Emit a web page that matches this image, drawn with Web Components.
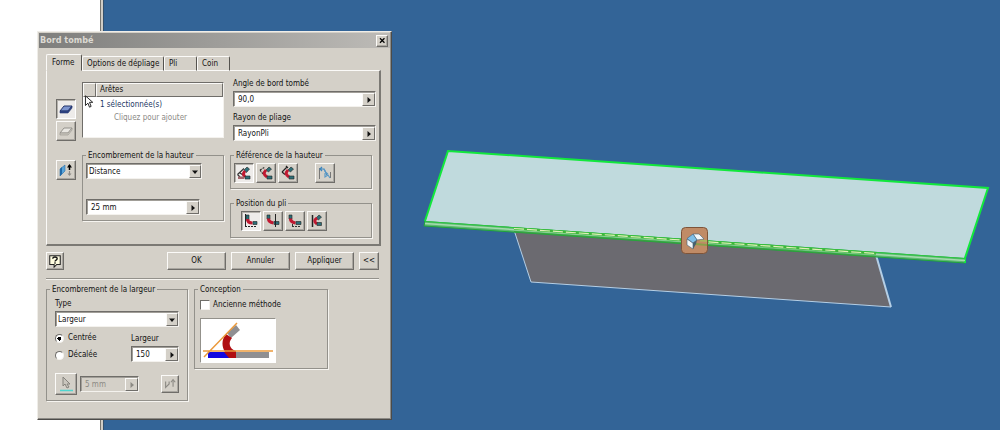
<!DOCTYPE html>
<html lang="fr">
<head>
<meta charset="utf-8">
<title>Bord tombé</title>
<style>
  body { margin: 0; }
</style>
</head>
<body>
<cad-app></cad-app>
<script>
const BASE = `
  *, *::before, *::after { box-sizing: border-box; }
  input, select, button { font: inherit; color: inherit; margin: 0; border-radius: 0; }
  :focus-visible { outline: 1px dotted #000; outline-offset: -3px; }
`;

function define(name, css, html) {
  customElements.define(name, class extends HTMLElement {
    constructor() {
      super();
      this.attachShadow({ mode: 'open' });
    }
    connectedCallback() {
      const body = typeof html === 'function' ? html(this) : html;
      this.shadowRoot.innerHTML = `<style>${BASE}${css}</style>${body}`;
    }
  });
}

const attr = (el, name) => el.getAttribute(name) || '';

const ICONS = {
  plateOn: `<path d="M2 10 6 5h8l-4 5z" fill="#7d95cf" stroke="#23346b"/><path d="M2 10v2h8l4-5V5l-4 5z" fill="#2f4685" stroke="#23346b" stroke-width=".6"/>`,
  plateOff: `<path d="M2 10 6 5h8l-4 5z" fill="#e9e7e2" stroke="#94928c"/><path d="M2 10v2h8l4-5V5l-4 5z" fill="#c9c6be" stroke="#94928c" stroke-width=".6"/>`,
  flip: `<path d="M2 7 7 3v6l-5 5z" fill="#58a4da" stroke="#2b6ea8" stroke-width=".6"/><path d="M2 7 4 5v7l-2 2z" fill="#226aa8"/><path d="M11.500 8V3" stroke="#000" stroke-width="1.500"/><path d="M9 5.500 11.500 2 14 5.500z" fill="#000"/><path d="M11.500 9v4" stroke="#8c8a86" stroke-width="1.200"/><path d="M9.500 11.500 11.500 14l2-2.500z" fill="#8c8a86"/>`,
  h1: `<path d="M1.500 9.500 8 3.500M1.500 9.500 4 12M4 8l3 2" stroke="#333" stroke-width="1.200"/><path d="m8 5 3-3 2.500 2-3 3.500z" fill="#2d6f78" stroke="#222" stroke-width=".6"/><path d="M9 6c-2 2-2 4 0 6" stroke="#c01931" stroke-width="3" fill="none"/><path d="M2 11.500h6V14H2z" fill="#a3666c"/><path d="M9 11h5v3H9z" fill="#2d6f78" stroke="#222" stroke-width=".6"/>`,
  h2: `<path d="m2 5 5-3M2 5l3 4" stroke="#333" stroke-width="1.200" stroke-dasharray="2 1"/><path d="m8 5 3-3 2.500 2-3 3z" fill="#2d6f78" stroke="#222" stroke-width=".6"/><path d="M8 5C5 8 6 10 9 12" stroke="#c01931" stroke-width="3" fill="none"/><path d="M9 11h5v3H9z" fill="#2d6f78" stroke="#222" stroke-width=".6"/>`,
  h3: `<path d="m2 7 5-5M2 7l3 2.500M6 1l2 2" stroke="#222" stroke-width="1.200"/><path d="m8 5 3-3 2.500 2-3 3z" fill="#2d6f78" stroke="#222" stroke-width=".6"/><path d="M8 5C5 8 6 10 9 12" stroke="#c01931" stroke-width="3" fill="none"/><path d="M9 11h5v3H9z" fill="#2d6f78" stroke="#222" stroke-width=".6"/>`,
  measure: `<path d="M2.500 3v11M13.500 7v6" stroke="#777" stroke-width="1"/><path d="M3 4h4l3 6M5 2 3 4l2 2" stroke="#3d86bd" stroke-width="1.200"/><path d="M7 4c1 3 2 4 4 5M8 8v4l3-2 2 3" stroke="#5c9ac6" stroke-width="1.200"/>`,
  p1: `<path d="M3 2h3v5H3z" fill="#2d6f78" stroke="#222" stroke-width=".6"/><path d="M4.500 6c0 2.500 2 4 5 4" stroke="#c01931" stroke-width="3.200"/><path d="M10 8.500h4v3h-4z" fill="#2d6f78" stroke="#222" stroke-width=".6"/><path d="M2.500 1v13" stroke="#222"/><path d="M2 13.500h12" stroke="#222" stroke-dasharray="2 1"/>`,
  p2: `<path d="M2 2h3v4H2z" fill="#2d6f78" stroke="#222" stroke-width=".6"/><path d="M3.500 5.500c0 2.500 2 4 5 4.500" stroke="#c01931" stroke-width="3.200"/><path d="M9 8.500h5v3H9z" fill="#2d6f78" stroke="#222" stroke-width=".6"/><path d="M10.500 1v13" stroke="#222"/>`,
  p3: `<path d="M2 2h3v4H2z" fill="#2d6f78" stroke="#222" stroke-width=".6"/><path d="M3.500 5.500c0 2.500 2 4 5 4.500" stroke="#c01931" stroke-width="3.200"/><path d="M9 8.500h5v3H9z" fill="#2d6f78" stroke="#222" stroke-width=".6"/><path d="M5.500 11v3M5 13.500h9" stroke="#333" stroke-dasharray="2 1"/>`,
  p4: `<path d="M3.500 2v12" stroke="#222" stroke-width="1.500"/><path d="m7 5 3-3 2.500 2-3 3z" fill="#2d6f78" stroke="#222" stroke-width=".6"/><path d="M8 5C5 7 5 9 8 11" stroke="#c01931" stroke-width="3"/><path d="M8 9.500h4.500v3H8z" fill="#2d6f78" stroke="#222" stroke-width=".6"/>`,
  help: `<path d="M2 2h12v10h-4l-3 3v-3H2z" fill="#fffde0" stroke="#222" stroke-width="1.200"/><path d="M5.500 5.500c0-3 5-2.500 5 0C10.500 7 8 7 8 8.500M8 9.500v1.500" fill="none" stroke="#111" stroke-width="1.500"/>`,
  pick: `<path d="M5 1v9l2-2 2 4 2-1-2-3h3z" fill="#c9c6be" stroke="#85837d"/><path d="M2 14.500h13" stroke="#4fd6d0" stroke-width="1.500"/>`,
  side: `<path d="M3 5v7l4-4V5" stroke="#8c8a84" stroke-width="1.300"/><path d="M11.500 11V4" stroke="#8c8a84" stroke-width="1.300"/><path d="m9 6 2.500-3L14 6" stroke="#8c8a84" stroke-width="1.300"/>`,
  close: `<path d="m3.500 4 8 8M11.500 4l-8 8" stroke="#000" stroke-width="2.200"/>`,
  cursor: `<path d="M3 1v12l3-3 2 5 2-1-2-5h4z" fill="#fff" stroke="#222" stroke-width="1.200"/>`,
  right: `<path d="M5 2v12l7-6z" fill="currentColor"/>`,
  down: `<path d="M2 5h12l-6 7z" fill="currentColor"/>`
};

define('glyph-icon',
  `:host { display: block; width: 16px; height: 16px; }
   svg { display: block; width: 100%; height: 100%; }`,
  el => `<svg viewBox="0 0 16 16" fill="none" aria-hidden="true">${ICONS[attr(el, 'name')]}</svg>`);

define('tool-button',
  `:host { display: block; width: var(--size, 20px); height: var(--size, 20px); }
   button { display: grid; place-items: center; width: 100%; height: 100%; padding: 0; background: #d4d0c8;
     border: 1px solid; border-color: #fbfaf8 #6f6d69 #6f6d69 #fbfaf8; box-shadow: inset -1px -1px #a9a6a0; }
   button[aria-pressed="true"] { background: #eeecea; border-color: #6f6d69 #fff #fff #6f6d69; box-shadow: inset 1px 1px #b5b2ac; }
   glyph-icon { width: var(--icon, 16px); height: var(--icon, 16px); }`,
  el => `<button type="button" aria-label="${attr(el, 'label')}" aria-pressed="${el.hasAttribute('pressed')}"
     ${el.hasAttribute('disabled') ? 'disabled' : ''}><glyph-icon name="${attr(el, 'icon')}"></glyph-icon></button>`);

define('push-button',
  `:host { display: block; width: 59px; height: 18px; }
   button { display: block; width: 100%; height: 100%; padding: 0; background: #d4d0c8; text-align: center;
     border: 1px solid; border-color: #fbfaf8 #6f6d69 #6f6d69 #fbfaf8; box-shadow: inset -1px -1px #a9a6a0; }`,
  `<button type="button"><slot></slot></button>`);

define('value-field',
  `:host { display: block; }
   label { display: block; line-height: 14px; white-space: nowrap; }
   .box { display: flex; height: 16px; background: #fff; border: 1px solid; border-color: #6f6d69 #f4f2ee #f4f2ee #6f6d69;
     box-shadow: inset 1px 1px #a19e98; padding: 1px 0 0 1px; }
   input { flex: 1; min-width: 0; border: 0; padding: 0 3px; background: none; outline: 0; }
   button { display: grid; place-items: center; width: 13px; padding: 0; background: #d4d0c8;
     border: 1px solid; border-color: #fbfaf8 #6f6d69 #6f6d69 #fbfaf8; }
   glyph-icon { width: 8px; height: 8px; }
   :host([disabled]) .box { background: #d4d0c8; }
   :host([disabled]) input, :host([disabled]) button { color: #8c8a84; }`,
  el => {
    const off = el.hasAttribute('disabled') ? 'disabled' : '';
    const label = attr(el, 'label');
    return `${label ? `<label for="v">${label}</label>` : ''}
      <div class="box"><input id="v" type="text" value="${attr(el, 'value')}" ${off} ${label ? '' : `aria-label="${attr(el, 'hint')}"`}>
      <button type="button" aria-label="Plus" ${off}><glyph-icon name="right"></glyph-icon></button></div>`;
  });

define('choice-field',
  `:host { display: block; }
   label { display: block; line-height: 14px; }
   .box { display: grid; position: relative; height: 16px; background: #fff; border: 1px solid;
     border-color: #6f6d69 #f4f2ee #f4f2ee #6f6d69; box-shadow: inset 1px 1px #a19e98; padding: 1px 0 0 1px; }
   select { appearance: none; width: 100%; height: 100%; border: 0; padding: 0 14px 0 1px; background: none; outline: 0; }
   .arrow { position: absolute; top: 1px; right: 0; bottom: 0; width: 12px; display: grid; place-items: center; pointer-events: none;
     background: #d4d0c8; border: 1px solid; border-color: #fbfaf8 #6f6d69 #6f6d69 #fbfaf8; }
   glyph-icon { width: 8px; height: 8px; }`,
  el => {
    const label = attr(el, 'label');
    return `${label ? `<label for="s">${label}</label>` : ''}
      <div class="box"><select id="s" ${label ? '' : `aria-label="${attr(el, 'hint')}"`}><option>${attr(el, 'value')}</option></select>
      <span class="arrow"><glyph-icon name="down"></glyph-icon></span></div>`;
  });

define('field-group',
  `:host { display: block; --inset: var(--pad-x, 3px); }
   fieldset { margin: 0; min-width: 0; height: 100%; padding: 2px var(--inset) 5px; border: 1px solid #93918b; box-shadow: 1px 1px #f6f4f0; }
   legend { margin-left: calc(3px - var(--inset)); padding: 0 2px; line-height: 14px; height: 12px; white-space: nowrap; }`,
  el => `<fieldset><legend>${attr(el, 'label')}</legend><slot></slot></fieldset>`);

define('edge-list',
  `:host { display: block; position: relative; height: 56px; background: #fff; border: 1px solid;
     border-color: #6f6d69 #f4f2ee #f4f2ee #6f6d69; }
   table { width: 100%; border-collapse: separate; border-spacing: 0; table-layout: fixed; }
   th, td { padding: 0 0 0 4px; text-align: left; font-weight: normal; line-height: 13px; height: 13px; }
   th { background: #d4d0c8; border: 1px solid; border-color: #fbfaf8 #6f6d69 #6f6d69 #fbfaf8; line-height: 12px; height: 14px; padding-left: 3px; }
   th:first-child { width: 13px; padding: 0; }
   tr:first-child td { padding-top: 1px; }
   td { color: #1c3763; }
   td.add { color: #8c8a86; padding-left: 18px; }
   glyph-icon { position: absolute; left: 0; top: 12px; width: 13px; height: 13px; }`,
  `<table><thead><tr><th aria-label="Sélection"></th><th>Arêtes</th></tr></thead>
   <tbody><tr><td></td><td>1 sélectionnée(s)</td></tr><tr><td></td><td class="add">Cliquez pour ajouter</td></tr></tbody></table>
   <glyph-icon name="cursor"></glyph-icon>`);

define('tab-strip',
  `:host { display: flex; align-items: flex-end; height: 17px; margin-bottom: -1px; position: relative; }
   button { height: 15px; padding: 0 0 0 2px; background: #d4d0c8; text-align: left; white-space: nowrap; border: 1px solid;
     border-color: #fbfaf8 #55534f #fbfaf8 #fbfaf8; border-radius: 2px 2px 0 0; width: 33px; }
   button[aria-selected="true"] { height: 17px; width: 36px; padding-left: 5px; border-bottom-color: #d4d0c8; }
   button.wide { width: 82px; }
   button:nth-child(n+3) { padding-left: 4px; }`,
  `<button type="button" role="tab" aria-selected="true">Forme</button><button type="button" role="tab" class="wide">Options de dépliage</button><button type="button" role="tab">Pli</button><button type="button" role="tab">Coin</button>`);

define('shape-panel',
  `:host { display: grid; grid-template-columns: 20px 142px 1fr; gap: 8px 6px; padding: 6px 3px 6px 9px; border: 1px solid;
     border-color: #fbfaf8 #7b7974 #7b7974 #fbfaf8; border-right-width: 2px; border-bottom-width: 2px; }
   .plates { display: flex; flex-direction: column; justify-content: flex-end; gap: 2px; }
   .fields { display: flex; flex-direction: column; gap: 4px; padding-left: 3px; }
   edge-list { margin-top: 5px; }
   .flip { padding-top: 11px; }
   .size { height: 72px; }
   .size choice-field { margin-bottom: 20px; margin-right: 18px; }
   .size value-field { margin-right: 20px; }
   .groups { display: flex; flex-direction: column; gap: 8px; padding-right: 4px; }
   .row { display: flex; gap: 2px; }
   .row .apart { margin-left: 15px; }
   .row.inset { padding: 0 0 1px 7px; }`,
  `<div class="plates"><tool-button icon="plateOn" label="Arête" pressed></tool-button><tool-button icon="plateOff" label="Boucle"></tool-button></div>
   <edge-list></edge-list>
   <div class="fields"><value-field label="Angle de bord tombé" value="90,0"></value-field><value-field label="Rayon de pliage" value="RayonPli"></value-field></div>
   <div class="flip"><tool-button icon="flip" label="Inverser"></tool-button></div>
   <field-group class="size" label="Encombrement de la hauteur">
     <choice-field hint="Encombrement" value="Distance"></choice-field>
     <value-field hint="Distance" value="25 mm"></value-field>
   </field-group>
   <div class="groups">
     <field-group label="Référence de la hauteur"><div class="row">
       <tool-button icon="h1" label="Référence 1" pressed></tool-button><tool-button icon="h2" label="Référence 2"></tool-button>
       <tool-button icon="h3" label="Référence 3"></tool-button><tool-button class="apart" icon="measure" label="Mesurer"></tool-button></div></field-group>
     <field-group label="Position du pli"><div class="row inset">
       <tool-button icon="p1" label="Position 1" pressed></tool-button><tool-button icon="p2" label="Position 2"></tool-button>
       <tool-button icon="p3" label="Position 3"></tool-button><tool-button icon="p4" label="Position 4"></tool-button></div></field-group>
   </div>`);

define('width-options',
  `:host { display: block; }
   field-group { --pad-x: 8px; }
   .mid { display: grid; grid-template-columns: 1fr 48px; margin-top: 5px; }
   .radios { display: flex; flex-direction: column; gap: 5px; }
   .radios label { display: flex; align-items: center; gap: 4px; height: 12px; line-height: 14px; }
   input { appearance: none; width: 9px; height: 9px; border-radius: 50%; background: #fff; border: 1px solid;
     border-color: #6f6d69 #f4f2ee #f4f2ee #6f6d69; }
   input:checked { background: radial-gradient(circle, #000 0 2px, #fff 2px); }
   .low { display: flex; align-items: center; gap: 3px; margin-top: 11px; }
   .low value-field { width: 59px; }
   .low tool-button:first-child { --size: 22px; }
   .low tool-button:last-child { --size: 18px; --icon: 14px; margin-left: auto; }`,
  `<field-group label="Encombrement de la largeur">
     <choice-field label="Type" value="Largeur"></choice-field>
     <div class="mid">
       <div class="radios"><label><input type="radio" name="align" checked>Centrée</label><label><input type="radio" name="align">Décalée</label></div>
       <value-field label="Largeur" value="150"></value-field>
     </div>
     <div class="low"><tool-button icon="pick" label="Sélectionner" disabled></tool-button><value-field hint="Décalage" value="5 mm" disabled></value-field><tool-button icon="side" label="Inverser" disabled></tool-button></div>
   </field-group>`);

define('design-options',
  `:host { display: block; }
   field-group { --pad-x: 5px; }
   label { display: flex; align-items: center; gap: 3px; height: 16px; line-height: 14px; }
   input { appearance: none; width: 10px; height: 10px; background: #fff; border: 1px solid; border-color: #6f6d69 #f4f2ee #f4f2ee #6f6d69; }
   svg { display: block; width: 76px; height: 45px; margin-top: 5px; background: #fff; border: 1px solid; border-color: #93918b #fff #fff #93918b; }`,
  `<field-group label="Conception">
     <label><input type="checkbox">Ancienne méthode</label>
     <svg viewBox="0 0 74 43" aria-hidden="true">
       <path d="M7 33h28v6H7z" fill="#1208e0"/><path d="M35 33h33v6H35z" fill="#8f8f92"/>
       <path d="m26 14 9-8 4 5-9 8z" fill="#8f8f92"/>
       <path d="M25 15c-5 6-4 13-1 18h-1l5 6h7v-7c-7-2-8-9-4-13z" fill="#b00e12"/>
       <path d="M2 32h70M3 38 36 4" stroke="#eb9a3c" stroke-width="1.500"/>
     </svg>
   </field-group>`);

define('flange-dialog',
  `:host { display: block; background: #d4d0c8; border: 1px solid; border-color: #efede8 #4c4b49 #4c4b49 #efede8;
     padding: 1px; box-shadow: inset -1px -1px #8d8b86; color: #111; }
   header { display: flex; align-items: center; height: 15px; padding: 0 2px 0 1px; background: linear-gradient(90deg, #7e7e7c, #bdbbb7); }
   h1 { flex: 1; margin: 0; font-size: 9px; line-height: 15px; color: #dcd9d2; }
   header tool-button { --size: 12px; --icon: 9px; }
   .body { padding: 6px 9px 17px 7px; }
   .actions { display: flex; gap: 5px; padding: 6px 2px 8px 0; }
   .actions tool-button { --size: 18px; --icon: 14px; margin-right: auto; }
   .actions push-button:last-child { width: 20px; }
   hr { margin: 0 2px 3px 0; border: 0; border-top: 1px solid #93918b; border-bottom: 1px solid #f6f4f0; }
   .more { display: grid; grid-template-columns: 142px 134px; gap: 6px; align-items: start; }`,
  `<header><h1>Bord tombé</h1><tool-button icon="close" label="Fermer"></tool-button></header>
   <div class="body">
     <tab-strip role="tablist"></tab-strip>
     <shape-panel></shape-panel>
     <div class="actions"><tool-button icon="help" label="Aide"></tool-button>
       <push-button>OK</push-button><push-button>Annuler</push-button><push-button>Appliquer</push-button><push-button>&lt;&lt;</push-button></div>
     <hr>
     <div class="more"><width-options></width-options><design-options></design-options></div>
   </div>`);

define('model-view',
  `:host { display: block; background: #336497; }
   svg { display: block; width: 100%; height: 100%; }`,
  `<svg viewBox="104 0 896 430" preserveAspectRatio="xMidYMid meet" role="img" aria-label="Pièce de tôlerie">
     <path d="M514 230 531 282 891 307 876 255z" fill="#6b6a70"/>
     <path d="M514 230 531 282 891 307" fill="none" stroke="#b5cfe6"/>
     <path d="M876 255 891 307" stroke="#b5cfe6" stroke-width="2"/>
     <path d="M425 221 965 258v5L424 226z" fill="#5fb873" stroke="#1fa53a"/>
     <path d="M448 151 988 188 965 258 425 221z" fill="#c0dadd"/>
     <path d="M425 221 448 151 988 188 965 258v5" fill="none" stroke="#12e83c" stroke-width="2"/>
     <path d="M425 221.500 965 258.500" stroke="#2cc740"/>
     <path d="M425 223.500 965 260.500" stroke="#a5dcae" stroke-width="1.500"/>
     <path d="M514 228.500 876 253.500" stroke="#3fb83c" stroke-width="2.500"/>
     <path d="M514 228.500 876 253.500" stroke="#dff0b8" stroke-width="1.200" stroke-dasharray="10 3"/>
     <path d="M514 231.500 876 256.500" stroke="#35a53c"/>
     <rect x="681.500" y="227.500" width="26" height="26" rx="4" fill="#c08b66" stroke="#7e5439"/>
     <path d="m700 240.500 7 .5" stroke="#a9b45e" stroke-width="2"/><path d="m695 244 12 1" stroke="#88a04a" stroke-width="2"/>
     <path d="m693 234 6 0 5 5-7 1z" fill="#f4f8fa" stroke="#41627a" stroke-width=".6"/>
     <path d="m687 239 6 4v6l-6-4z" fill="#f4f8fa" stroke="#41627a" stroke-width=".6"/>
     <path d="m687 238.500 6-4.500 4 6-4 3z" fill="#7fbfe8" stroke="#41627a" stroke-width=".6"/>
     <path d="m693 243 4-3-1 4-3 5z" fill="#47606f"/>
   </svg>`);

define('cad-app',
  `:host { display: grid; grid-template-columns: 104px 1fr; min-height: 100vh; position: relative;
     font: 8px/12px "DejaVu Sans Condensed", "DejaVu Sans", sans-serif; }
   aside { background: #fff; border-right: 1px solid #34506c; box-shadow: inset -2px 0 #d0cdc6, inset -3px 0 #77756f; }
   flange-dialog { position: absolute; left: 37px; top: 31px; width: 355px; }`,
  `<aside></aside><model-view></model-view><flange-dialog></flange-dialog>`);
</script>
</body>
</html>
